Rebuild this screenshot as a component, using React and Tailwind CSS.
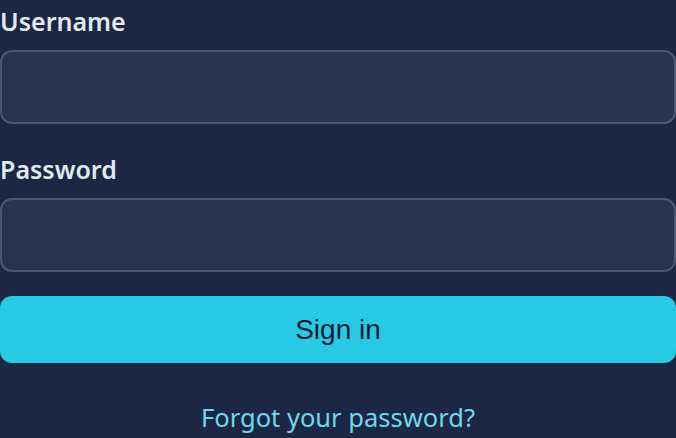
import React from 'react';

const fieldClass =
  'block w-full h-[74px] rounded-xl border-2 border-[#4a5873] bg-[#293550] px-4 text-[22px] text-slate-100 outline-none';

export default function App() {
  return (
    <div className="h-screen w-full overflow-hidden bg-[#1c2843] font-['Noto_Sans',sans-serif]">
      <form className="flex flex-col" onSubmit={(e) => e.preventDefault()}>
        <label htmlFor="username" className="block pt-[4px] text-[25px] font-semibold leading-[34px] text-[#e2e8f0]">
          Username
        </label>
        <input id="username" type="text" className={`${fieldClass} mt-[12px]`} />

        <label htmlFor="password" className="mt-[28px] block text-[25px] font-semibold leading-[34px] text-[#e2e8f0]">
          Password
        </label>
        <input id="password" type="password" className={`${fieldClass} mt-[12px]`} />

        <button
          type="submit"
          className="mt-[24px] h-[67px] w-full rounded-xl bg-[#28c9e5] font-['Liberation_Sans',sans-serif] text-[28px] text-[#0f1c33]"
        >
          Sign in
        </button>

        <div className="mt-[37px] text-center">
          <a href="#" className="text-[25.5px] leading-[34px] text-[#6fd8ee]">
            Forgot your password?
          </a>
        </div>
      </form>
    </div>
  );
}
